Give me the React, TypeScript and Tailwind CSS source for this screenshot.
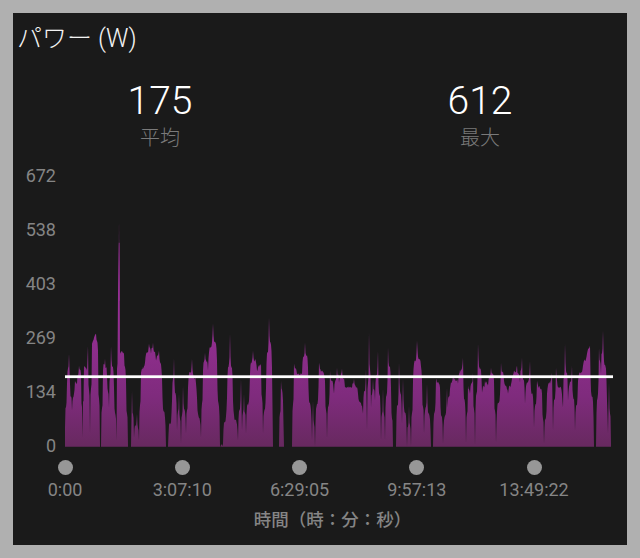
const font = "font-['Roboto','Noto_Sans_CJK_JP',sans-serif]";

// power samples as x,y in page pixels
const samples = [
  [65, 446], [65, 427], [67, 383], [69, 353], [70, 383], [72, 410], [75, 380], [77, 383], [79, 365], [81, 373], [82.5, 437],
  [84, 365], [87, 370], [88, 345], [90, 433], [92, 343], [94, 337], [96, 333], [98, 350], [100, 446], [101, 446], [103, 370],
  [105, 358], [107, 375], [109, 407], [111, 345], [114, 387], [116.5, 440], [118, 293], [118.8, 242], [119.5, 242], [120, 353],
  [122, 350], [124, 353], [126, 380], [128, 446], [131, 446], [132, 390], [134, 437], [137, 413], [139, 440], [141, 372],
  [145, 362], [149, 343], [151, 353], [153, 342], [156, 360], [159, 350], [162, 377], [166, 446], [168, 446], [172, 400],
  [174, 357], [177, 430], [179, 393], [181, 443], [183, 385], [186, 433], [188, 387], [192, 358], [197, 397], [201, 437],
  [203, 370], [205, 352], [208, 370], [213, 323], [217, 360], [220, 446], [223, 443], [227, 397], [230, 333], [233, 400],
  [238, 440], [241, 378], [242, 430], [244, 393], [246, 433], [250, 373], [253, 350], [257, 370], [258, 367], [261, 363],
  [263, 433], [266, 387], [269, 317], [272, 367], [273, 446], [279, 446], [281, 380], [283, 400], [284, 446], [292, 446],
  [294, 363], [297, 373], [302, 373], [305, 342], [308, 367], [312, 440], [313, 400], [315, 446], [319, 362], [325, 380],
  [327, 438], [330, 370], [334, 393], [337, 367], [339, 382], [342, 368], [345, 387], [352, 387], [354, 378], [358, 393],
  [363, 413], [366, 368], [367, 430], [369, 332], [371, 407], [373, 378], [375, 400], [378, 350], [381, 440], [383, 387],
  [385, 440], [388, 347], [391, 387], [393, 446], [396, 446], [399, 362], [402, 423], [403, 378], [407, 446], [409, 405],
  [411, 446], [413, 380], [417, 340], [422, 380], [424, 433], [427, 383], [431, 446], [433, 446], [436, 378], [440, 387],
  [443, 443], [447, 387], [447.5, 407], [450, 388], [453, 375], [458, 383], [463, 357], [466, 443], [468, 385], [470, 393],
  [473, 372], [475, 445], [478, 343], [482, 392], [485, 380], [488, 385], [491, 367], [494, 380], [496, 442], [501, 362],
  [504, 380], [508, 393], [512, 378], [517, 365], [520, 382], [522, 357], [525, 403], [530, 360], [534, 427], [537, 380],
  [542, 393], [544, 443], [547, 393], [552, 372], [553, 430], [556, 367], [563, 407], [565, 343], [568, 400], [572, 365],
  [575, 430], [578, 380], [583, 365], [587, 353], [590, 345], [594, 446], [596, 446], [599, 347], [601, 373], [603, 330],
  [607, 400], [608, 433], [609, 382], [611, 443], [611, 446],
];

// peaks and dips are needle thin, so ease each segment to stay flat in its middle
function needlePoints() {
  const out: string[] = [];
  let seed = 7;
  for (let i = 0; i < samples.length - 1; i++) {
    const [x0, y0] = samples[i];
    const [x1, y1] = samples[i + 1];
    out.push(`${x0},${y0}`);
    const steps = Math.floor((x1 - x0) * 2);
    for (let s = 1; s < steps; s++) {
      const t = s / steps;
      const u = 2 * t - 1;
      const f = 0.5 + 0.5 * Math.sign(u) * Math.abs(u) ** 3;
      seed = (seed * 31 + 11) % 97;
      const jitter = y0 === 446 && y1 === 446 ? 0 : ((seed / 97) - 0.5) * 3;
      out.push(`${x0 + (x1 - x0) * t},${Math.min(446, y0 + (y1 - y0) * f + jitter)}`);
    }
  }
  out.push("611,446");
  return out.join(" ");
}

const yLabels = ["672", "538", "403", "269", "134", "0"];
const xLabels = ["0:00", "3:07:10", "6:29:05", "9:57:13", "13:49:22"];

function PowerChart() {
  return (
    <svg className="h-[290px] w-[562px]" viewBox="65 165.3 562 290">
      <defs>
        <linearGradient id="power" x1="0" y1="320" x2="0" y2="446" gradientUnits="userSpaceOnUse">
          <stop offset="0" stopColor="#962f94" />
          <stop offset="0.6" stopColor="#7f2b7d" />
          <stop offset="1" stopColor="#67295f" />
        </linearGradient>
      </defs>
      <path d="M118.5 300L119 220L119.7 300Z" fill="#7a2b78" />
      <polygon points={needlePoints()} fill="url(#power)" />
      <rect x="65" y="374.6" width="548" height="2.8" fill="#ffffff" />
    </svg>
  );
}

export default function App() {
  return (
    <div className={`h-[558px] w-[640px] overflow-hidden bg-[#b0b0b0] p-[13px] ${font}`}>
      <div className="h-[532px] w-[614px] bg-[#1a1a1a]">
        <div className="h-[50px] pl-[4px] pt-[9px] text-[25px] leading-[34px] font-light text-[#f2f2f2]">パワー (W)</div>

        <div className="ml-[-13px] grid w-[640px] grid-cols-2 pt-[15px]">
          {[["175", "平均"], ["612", "最大"]].map(([value, label]) => (
            <div key={label} className="flex flex-col items-center">
              <div className="text-[39px] leading-[46px] font-light text-white">{value}</div>
              <div className="text-[20px] leading-[28px] font-light text-[#7a7a7a]">{label}</div>
            </div>
          ))}
        </div>

        <div className="mt-[14px] flex h-[290px]">
          <div className="flex w-[43px] flex-col justify-between text-right text-[18px] leading-[20px] text-[#858585]">
            {yLabels.map((l) => (
              <div key={l}>{l}</div>
            ))}
          </div>
          <div className="ml-[9px]">
            <PowerChart />
          </div>
        </div>

        <div className="ml-[-6.6px] mt-[4px] flex">
          {xLabels.map((l) => (
            <div key={l} className="flex w-[117.25px] flex-col items-center">
              <div className="h-[15px] w-[15px] rounded-full bg-[#979797]" />
              <div className="mt-[3px] text-[18px] leading-[24px] text-[#858585]">{l}</div>
            </div>
          ))}
        </div>

        <div className="ml-[21px] mt-[6px] w-[597px] text-center text-[17.5px] leading-[24px] font-medium text-[#858585]">
          時間（時：分：秒）
        </div>
      </div>
    </div>
  );
}
